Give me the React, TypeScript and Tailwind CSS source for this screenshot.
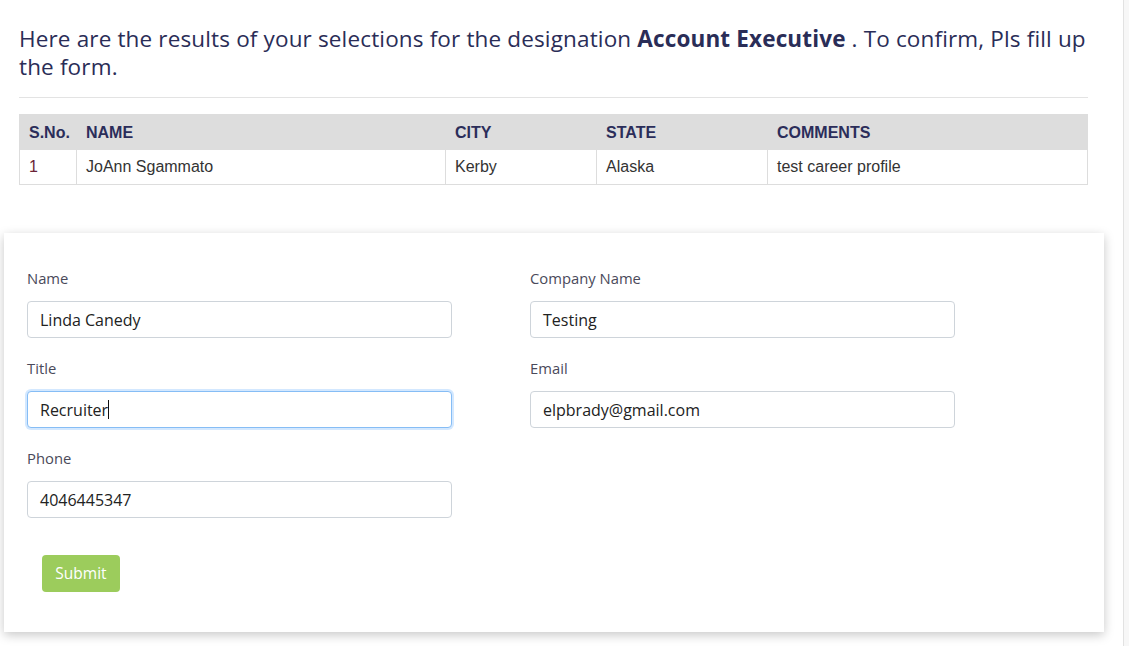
import React from "react";

const cols = [
  { h: "S.No.", v: "1", w: "w-[57px]", c: "text-[#6a2437]" },
  { h: "NAME", v: "JoAnn Sgammato", w: "w-[369px]", c: "text-[#333]" },
  { h: "CITY", v: "Kerby", w: "w-[151px]", c: "text-[#333]" },
  { h: "STATE", v: "Alaska", w: "w-[171px]", c: "text-[#333]" },
  { h: "COMMENTS", v: "test career profile", w: "", c: "text-[#333]" },
];

function Field({ label, value, focused }: { label: string; value: string; focused?: boolean }) {
  return (
    <div className="flex flex-col">
      <label className="text-[14.8px] leading-[20px] text-[#4a4a5a] mb-[13px]">{label}</label>
      <div
        className={
          "w-[425px] h-[37px] rounded-[4px] border bg-white flex items-center px-[12px] text-[16px] text-[#222] " +
          (focused
            ? "border-[#86bdf5] shadow-[0_0_0_2px_rgba(128,189,255,0.35)]"
            : "border-[#ced4da]")
        }
      >
        <span>{value}</span>
        {focused && <span className="inline-block w-[1px] h-[19px] bg-[#111]" />}
      </div>
    </div>
  );
}

export default function App() {
  return (
    <div className="flex w-[1129px] h-[646px] bg-white overflow-hidden" style={{ fontFamily: "'Open Sans', 'Noto Sans', sans-serif" }}>
      <div className="w-[1123px] shrink-0">
        <div className="pl-[19px] pr-[35px] pt-[25px]">
          <p className="text-[22.5px] leading-[28px] text-[#2a2d57] tracking-[0.15px] w-[1076px]">
            Here are the results of your selections for the designation{" "}
            <b className="font-bold">Account Executive</b> . To confirm, Pls fill up the form.
          </p>
          <div className="mt-[16px] h-px bg-[#e3e3e3]" />
          <div
            className="mt-[16px] w-[1069px] border border-[#dddddd] text-[16px]"
            style={{ fontFamily: "'Liberation Sans', Arial, sans-serif" }}
          >
            <div className="flex h-[35px] bg-[#dddddd]">
              {cols.map((c) => (
                <div key={c.h} className={`${c.w || "flex-1"} px-[9px] flex items-center font-bold text-[#2b2d5a]`}>
                  {c.h}
                </div>
              ))}
            </div>
            <div className="flex h-[34px]">
              {cols.map((c, i) => (
                <div
                  key={c.h}
                  className={`${c.w || "flex-1"} px-[9px] flex items-center ${c.c} ${i < cols.length - 1 ? "border-r border-[#dddddd]" : ""}`}
                >
                  {c.v}
                </div>
              ))}
            </div>
          </div>
        </div>
        <div className="ml-[4px] mt-[48px] w-[1100px] h-[399px] bg-white shadow-[0_3px_10px_rgba(0,0,0,0.22)] pt-[35px] pl-[23px]">
          <div className="grid grid-cols-[503px_503px] gap-y-[20px]">
            <Field label="Name" value="Linda Canedy" />
            <Field label="Company Name" value="Testing" />
            <Field label="Title" value="Recruiter" focused />
            <Field label="Email" value="elpbrady@gmail.com" />
            <Field label="Phone" value="4046445347" />
          </div>
          <button className="mt-[37px] ml-[15px] w-[78px] h-[37px] rounded-[4px] bg-[#9ccc5c] text-white text-[15.5px]">
            Submit
          </button>
        </div>
      </div>
      <div className="flex-1 border-l border-[#e2e2e2] bg-[#f7f7f7]" />
    </div>
  );
}
